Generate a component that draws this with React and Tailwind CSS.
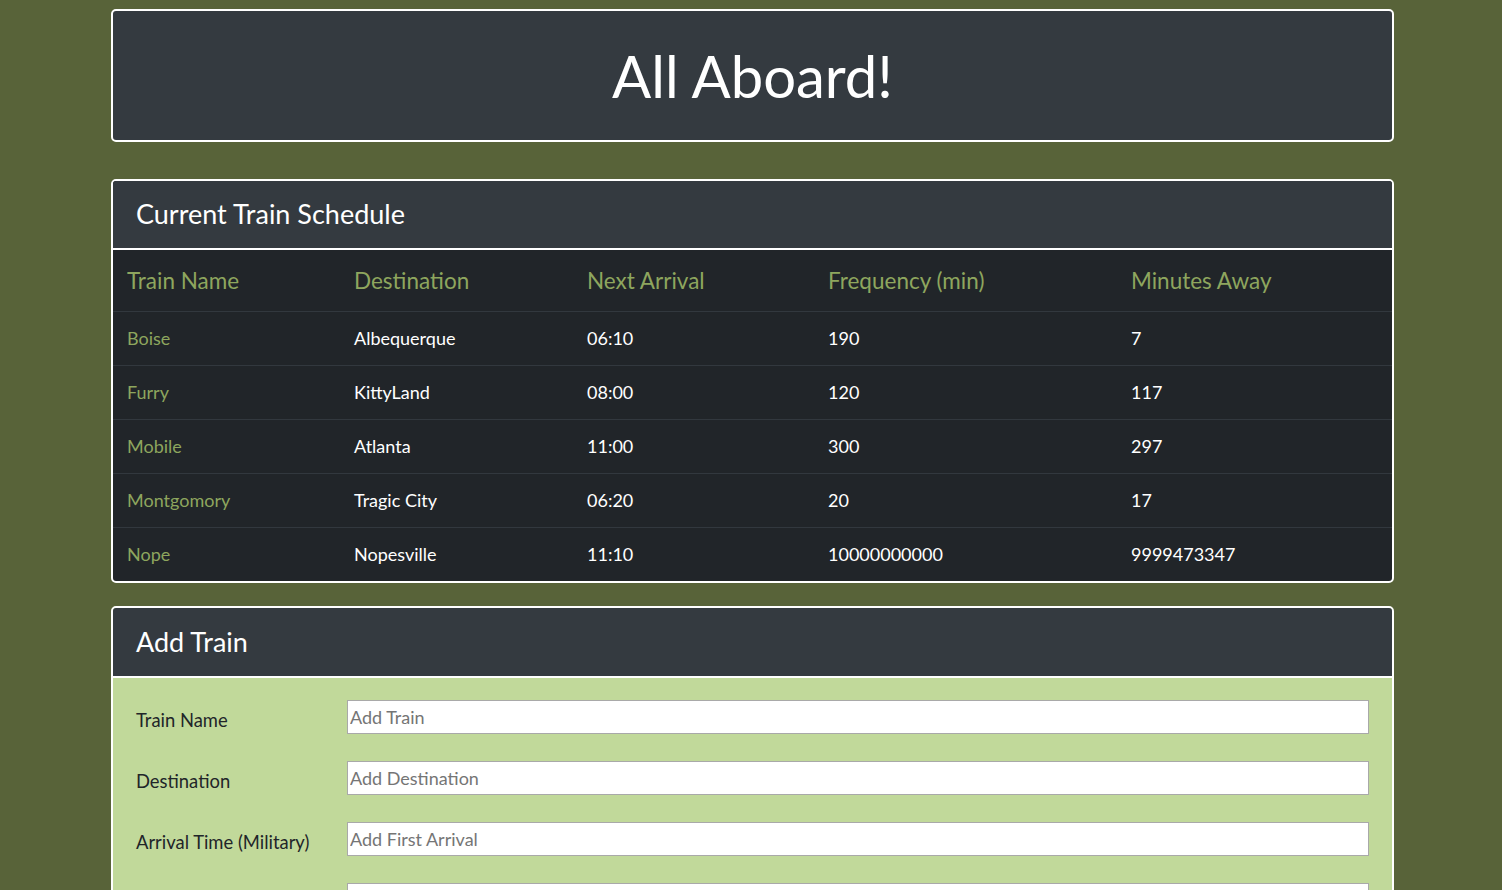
import React from "react";

const rows = [
  ["Boise", "Albequerque", "06:10", "190", "7"],
  ["Furry", "KittyLand", "08:00", "120", "117"],
  ["Mobile", "Atlanta", "11:00", "300", "297"],
  ["Montgomory", "Tragic City", "06:20", "20", "17"],
  ["Nope", "Nopesville", "11:10", "10000000000", "9999473347"],
];

const cols = "grid grid-cols-[227px_233px_241px_303px_1fr]";

const fields = [
  ["Train Name", "Add Train"],
  ["Destination", "Add Destination"],
  ["Arrival Time (Military)", "Add First Arrival"],
  ["Frequency (min)", "Add Frequency"],
];

export default function App() {
  return (
    <div
      className="min-h-screen bg-[#586339] pt-[9px] pb-10"
      style={{ fontFamily: "Lato, 'Open Sans', sans-serif" }}
    >
      <div className="ml-[111px] w-[1283px] flex flex-col">
        <div className="h-[133px] border-2 border-white rounded-[5px] bg-[#343a40] flex items-center justify-center">
          <h1 className="text-[58px] leading-[1.2] font-normal text-white">All Aboard!</h1>
        </div>

        <div className="mt-[37px] border-2 border-white rounded-[5px] overflow-hidden bg-[#212529]">
          <div className="h-[69px] bg-[#343a40] border-b-2 border-white flex items-center px-[23px]">
            <h3 className="text-[27px] leading-[1.2] text-white">Current Train Schedule</h3>
          </div>
          <div className={`${cols} h-[61px] items-center text-[22.5px] text-[#8ea65e]`}>
            <div className="pl-[14px]">Train Name</div>
            <div className="pl-[14px]">Destination</div>
            <div className="pl-[14px]">Next Arrival</div>
            <div className="pl-[14px]">Frequency (min)</div>
            <div className="pl-[14px]">Minutes Away</div>
          </div>
          {rows.map((r) => (
            <div
              key={r[0]}
              className={`${cols} h-[54px] items-center border-t border-[#32383e] text-[18px] text-white`}
            >
              <div className="pl-[14px] text-[#8ea65e]">{r[0]}</div>
              <div className="pl-[14px]">{r[1]}</div>
              <div className="pl-[14px]">{r[2]}</div>
              <div className="pl-[14px]">{r[3]}</div>
              <div className="pl-[14px]">{r[4]}</div>
            </div>
          ))}
        </div>

        <div className="mt-[23px] border-2 border-white rounded-[5px] overflow-hidden bg-[#c1d99a]">
          <div className="h-[70px] bg-[#343a40] border-b-2 border-white flex items-center px-[23px]">
            <h3 className="text-[27px] leading-[1.2] text-white">Add Train</h3>
          </div>
          <div className="pt-[22px] pb-[30px] px-[23px] flex flex-col gap-[27px]">
            {fields.map(([label, ph]) => (
              <div key={label} className="flex items-start h-[34px]">
                <label className="w-[211px] pt-[7px] text-[18.4px] leading-[27px] text-[#212529]">
                  {label}
                </label>
                <input
                  type="text"
                  placeholder={ph}
                  className="w-[1022px] h-[34px] bg-white border border-[#a9a9a9] px-[2px] text-[18px] text-[#212529] placeholder:text-[#757575] outline-none"
                />
              </div>
            ))}
            <div>
              <button className="ml-[211px] px-4 py-2 bg-[#343a40] text-white text-[18px] rounded">
                Submit
              </button>
            </div>
          </div>
        </div>
      </div>
    </div>
  );
}
